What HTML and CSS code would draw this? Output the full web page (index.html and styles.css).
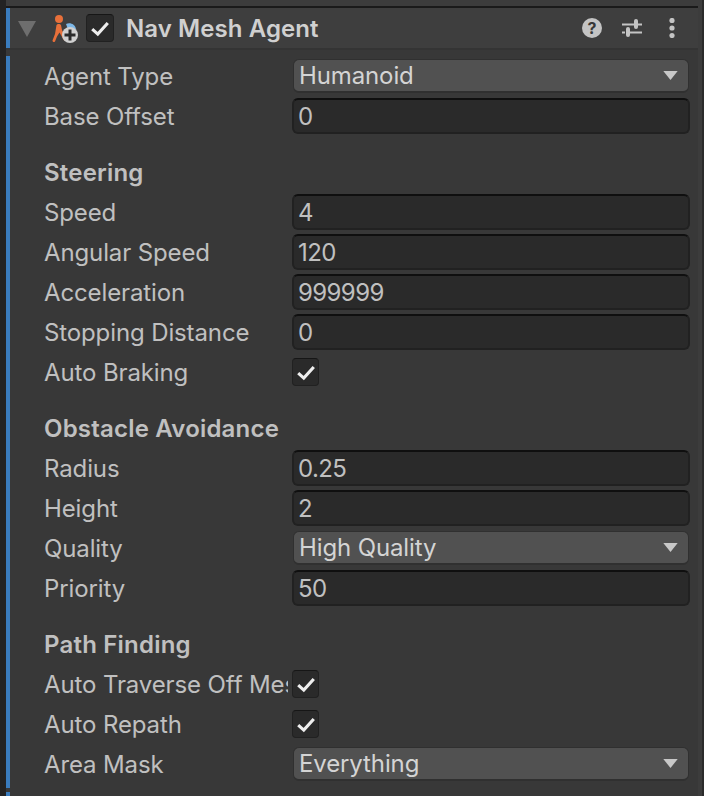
FILE: index.html
```html
<!DOCTYPE html>
<html lang="en">
<head>
<meta charset="utf-8">
<title>Nav Mesh Agent</title>
<link rel="stylesheet" href="styles.css">
</head>
<body>
<div class="window">
  <div class="gutter"></div>
  <main class="panel">
    <div class="top-strip"></div>
    <header class="head">
      <svg class="foldout" viewBox="0 0 18 16"><path d="M0 0h18L9 16z"/></svg>
      <svg class="agent-icon" viewBox="0 0 30 30">
        <path class="flag" d="M15 10c4-2 9 0 10 5l-7 3z"/>
        <circle class="body-o" cx="8" cy="5" r="4"/>
        <path class="body-o" d="M5.500 11c.5-1.500 4-1.500 4.500 0l1 5 4.500 9.500-2.500 1-4.500-8-2.500 4-2 5c-1 1-2.500.5-2.500-1l2.500-6.500z"/>
        <circle class="plus-bg" cx="19" cy="21" r="8"/>
        <path class="plus" d="M17.500 15.500h3v4h4v3h-4v4h-3v-4h-4v-3h4z"/>
      </svg>
      <span class="box box-head"><svg class="tick" viewBox="0 0 18 18"><path d="M2 10l5 4.500 9-10"/></svg></span>
      <span class="title">Nav Mesh Agent</span>
      <span class="tools">
        <svg class="tool" viewBox="0 0 20 20"><circle class="fill" cx="10" cy="10" r="10"/><text class="q" x="10" y="16">?</text></svg>
        <svg class="tool" viewBox="0 0 20 20"><path class="line" d="M0 6.500h12M15 6.500h5M0 14.500h3M7 14.500h13"/><rect class="fill" x="12" y="1" width="4" height="10" rx="2"/><rect class="fill" x="4" y="9" width="4" height="10" rx="2"/></svg>
        <svg class="tool" viewBox="0 0 20 20"><circle class="fill" cx="10" cy="2.500" r="2.600"/><circle class="fill" cx="10" cy="10" r="2.600"/><circle class="fill" cx="10" cy="17.500" r="2.600"/></svg>
      </span>
    </header>
    <div class="body">
      <div class="accent"><i class="accent-main"></i><i class="accent-next"></i></div>
      <div class="props">
        <section class="group">
          <div class="row"><span class="label">Agent Type</span><span class="drop">Humanoid<svg class="arrow" viewBox="0 0 16 10"><path d="M0 0h16L8 10z"/></svg></span></div>
          <div class="row"><span class="label">Base Offset</span><span class="field">0</span></div>
        </section>
        <section class="group">
          <div class="row"><span class="label heading">Steering</span></div>
          <div class="row"><span class="label">Speed</span><span class="field">4</span></div>
          <div class="row"><span class="label">Angular Speed</span><span class="field">120</span></div>
          <div class="row"><span class="label">Acceleration</span><span class="field">999999</span></div>
          <div class="row"><span class="label">Stopping Distance</span><span class="field">0</span></div>
          <div class="row"><span class="label">Auto Braking</span><span class="box"><svg class="tick" viewBox="0 0 18 18"><path d="M2 10l5 4.500 9-10"/></svg></span></div>
        </section>
        <section class="group">
          <div class="row"><span class="label heading">Obstacle Avoidance</span></div>
          <div class="row"><span class="label">Radius</span><span class="field">0.25</span></div>
          <div class="row"><span class="label">Height</span><span class="field">2</span></div>
          <div class="row"><span class="label">Quality</span><span class="drop">High Quality<svg class="arrow" viewBox="0 0 16 10"><path d="M0 0h16L8 10z"/></svg></span></div>
          <div class="row"><span class="label">Priority</span><span class="field">50</span></div>
        </section>
        <section class="group">
          <div class="row"><span class="label heading">Path Finding</span></div>
          <div class="row"><span class="label clipped">Auto Traverse Off Mesh Link</span><span class="box"><svg class="tick" viewBox="0 0 18 18"><path d="M2 10l5 4.500 9-10"/></svg></span></div>
          <div class="row"><span class="label">Auto Repath</span><span class="box"><svg class="tick" viewBox="0 0 18 18"><path d="M2 10l5 4.500 9-10"/></svg></span></div>
          <div class="row"><span class="label">Area Mask</span><span class="drop">Everything<svg class="arrow" viewBox="0 0 16 10"><path d="M0 0h16L8 10z"/></svg></span></div>
        </section>
      </div>
    </div>
  </main>
  <div class="rail"></div>
</div>
</body>
</html>
```
FILE: styles.css
```css
* { box-sizing: border-box; }
html, body { margin: 0; padding: 0; height: 100%; background: #383838; }
body { font-family: Inter, "Liberation Sans", sans-serif; font-size: 24px; letter-spacing: -0.12px; color: #c0c0c0; overflow: hidden; }
.window { display: flex; height: 796px; }
.gutter { width: 6px; flex: none; background: #232323; }
.panel { flex: 1; min-width: 0; display: flex; flex-direction: column; }
.rail { width: 6px; flex: none; background: #3c3c3c; border-right: 2px solid #2b2b2b; }
.top-strip { height: 8px; flex: none; background: #3c3c3c; border-bottom: 2px solid #1a1a1a; }
.head { height: 42px; flex: none; display: flex; align-items: center; background: #3e3e3e; border-bottom: 2px solid #343434; box-shadow: inset 4px 0 0 #3a7cbd; }
.foldout { width: 18px; height: 16px; margin: 2px 0 0 12px; fill: #6e6e6e; flex: none; }
.agent-icon { width: 30px; height: 30px; margin: 2px 0 0 15px; flex: none; }
.body-o { fill: #e8703a; }
.flag { fill: #7db8e8; }
.plus-bg { fill: #d0d0d0; }
.plus { fill: #2a2a2a; }
.box { width: 27px; height: 28px; flex: none; display: flex; align-items: center; justify-content: center; background: #2a2a2a; border: 1px solid #212121; border-top-color: #161616; border-radius: 4px; }
.box-head { width: 28px; margin-left: 5px; }
.tick { width: 20px; height: 20px; flex: none; fill: none; stroke: #eeeeee; stroke-width: 2.800; }
.title { margin-left: 12px; font-weight: 600; letter-spacing: 0.08px; color: #d0d0d0; white-space: nowrap; }
.tools { margin-left: auto; margin-right: 16px; display: flex; gap: 20px; }
.tool { width: 20px; height: 20px; flex: none; }
.fill { fill: #c4c4c4; }
.line { fill: none; stroke: #c4c4c4; stroke-width: 2; }
.q { fill: #383838; font-size: 16px; font-weight: 700; text-anchor: middle; font-family: Inter, sans-serif; }
.body { flex: 1; min-height: 0; display: flex; padding-top: 6px; }
.accent { width: 4px; flex: none; display: flex; flex-direction: column; gap: 4px; }
.accent-main { height: 732px; flex: none; background: #3a7cbd; }
.accent-next { flex: 1; background: #3a7cbd; }
.props { flex: 1; min-width: 0; display: flex; flex-direction: column; gap: 16px; padding-left: 34px; }
.row { height: 40px; display: flex; align-items: center; }
.label { width: 248px; flex: none; white-space: nowrap; }
.clipped { width: 244px; margin-right: 4px; overflow: hidden; }
.heading { font-weight: 600; letter-spacing: 0.2px; }
.field { width: 398px; height: 36px; flex: none; display: flex; align-items: center; padding: 0 4px; letter-spacing: -0.6px; background: #2a2a2a; border: 2px solid #212121; border-top-color: #0f0f0f; border-radius: 6px; }
.drop { width: 396px; height: 34px; margin-left: 1px; flex: none; display: flex; align-items: center; justify-content: space-between; padding: 0 10px 0 5px; background: #515151; border: 1px solid #303030; border-bottom-width: 2px; border-radius: 6px; color: #d4d4d4; }
.arrow { width: 15px; height: 9px; fill: #c8c8c8; }
```
